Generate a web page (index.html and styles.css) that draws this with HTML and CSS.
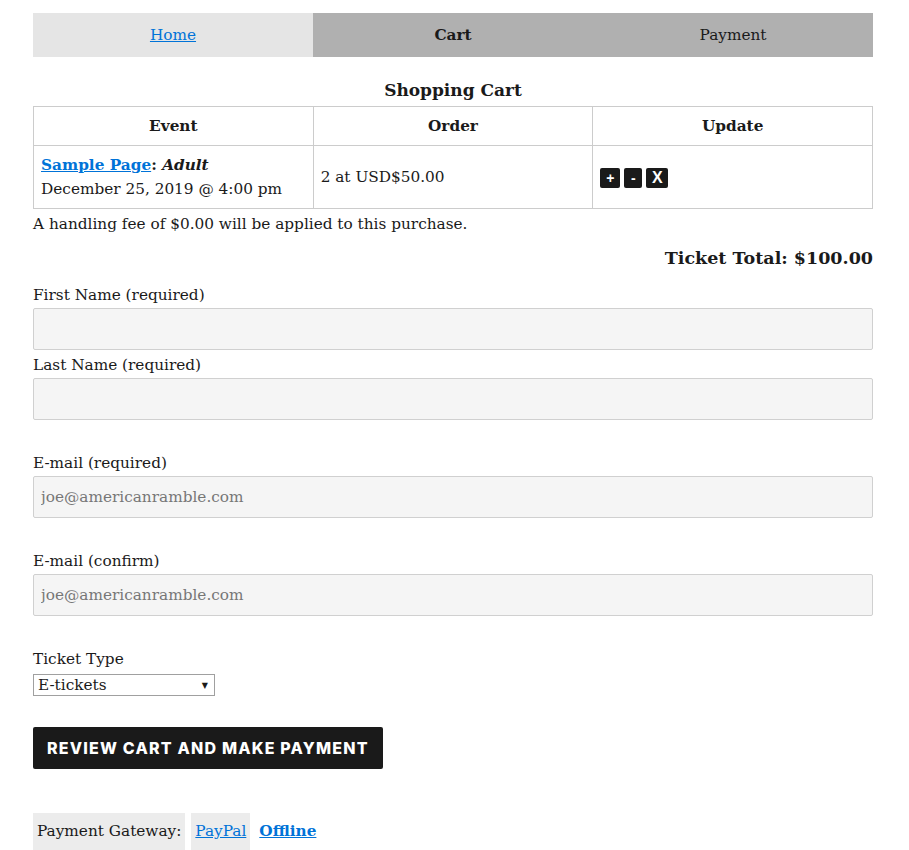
FILE: index.html
```html
<!DOCTYPE html>
<html lang="en">
<head>
    <meta charset="utf-8">
    <title>Shopping Cart</title>
    <link rel="stylesheet" href="styles.css">
</head>
<body>
<div class="wrap">
    <ul class="steps">
        <li class="step home"><a href="#">Home</a></li>
        <li class="step current">Cart</li>
        <li class="step">Payment</li>
    </ul>

    <table class="cart">
        <caption>Shopping Cart</caption>
        <thead>
        <tr>
            <th>Event</th>
            <th>Order</th>
            <th>Update</th>
        </tr>
        </thead>
        <tbody>
        <tr>
            <td><a href="#" class="event">Sample Page</a><strong>: <em>Adult</em></strong><br>December 25, 2019 @ 4:00 pm</td>
            <td>2 at USD$50.00</td>
            <td>
                <span class="upd">+</span><span class="upd">-</span><span class="upd big">X</span>
            </td>
        </tr>
        </tbody>
    </table>
    <p class="fee">A handling fee of $0.00 will be applied to this purchase.</p>
    <p class="total">Ticket Total: $100.00</p>

    <form class="checkout">
        <label for="fname">First Name (required)</label>
        <input type="text" id="fname">
        <label for="lname">Last Name (required)</label>
        <input type="text" id="lname">

        <label for="email" class="spaced">E-mail (required)</label>
        <input type="text" id="email" placeholder="joe@americanramble.com">

        <label for="email2" class="spaced">E-mail (confirm)</label>
        <input type="text" id="email2" placeholder="joe@americanramble.com">

        <label for="ttype" class="spaced">Ticket Type</label>
        <div class="select">
            <span>E-tickets</span>
            <span class="arrow">&#9660;</span>
        </div>

        <button type="button" class="review">Review cart and make payment</button>
    </form>

    <div class="gateway">
        <span class="gw-label">Payment Gateway:</span>
        <a href="#" class="gw-opt">PayPal</a>
        <a href="#" class="gw-opt active">Offline</a>
    </div>
</div>
</body>
</html>
```

FILE: styles.css
```css
body {
    margin: 0;
    font-family: "DejaVu Serif", serif;
    font-size: 15.3px;
    color: #1a1a1a;
    background: #fff;
}
.wrap {
    width: 840px;
    margin: 0 0 0 33px;
    padding-top: 13px;
}
a {
    color: #0073d8;
}

.steps {
    display: flex;
    list-style: none;
    margin: 0;
    padding: 0;
}
.step {
    flex: 1;
    height: 44px;
    line-height: 44px;
    text-align: center;
    background: #b0b0b0;
}
.step.home {
    background: #e5e5e5;
}
.step.current {
    font-weight: bold;
}

.cart {
    width: 100%;
    border-collapse: collapse;
    table-layout: fixed;
    margin-top: 23px;
}
.cart caption {
    font-size: 17px;
    font-weight: bold;
    padding-bottom: 6px;
}
.cart th, .cart td {
    border: 1px solid #cccccc;
    padding: 7px 7px;
}
.cart th {
    height: 24px;
    font-weight: bold;
}
.cart td {
    line-height: 24px;
    height: 48px;
}
.event {
    font-weight: bold;
}
.upd {
    display: inline-block;
    background: #1a1a1a;
    color: #fff;
    font-family: "Liberation Sans", sans-serif;
    font-weight: bold;
    font-size: 14px;
    line-height: 20px;
    height: 20px;
    width: 20px;
    text-align: center;
    border-radius: 2px;
    margin-right: 4px;
    vertical-align: middle;
}
.upd + .upd {
    width: 18px;
}
.upd.big {
    width: 22px;
    font-size: 16px;
}

.fee {
    margin: 6px 0 0 0;
}
.total {
    margin: 15px 0 0 0;
    text-align: right;
    font-size: 17.5px;
    font-weight: bold;
}

.checkout {
    display: flex;
    flex-direction: column;
    align-items: flex-start;
    margin-top: 15px;
}
.checkout label {
    line-height: 24px;
    margin-bottom: 1px;
}
.checkout label.spaced {
    margin-top: 28px;
}
.checkout input {
    box-sizing: border-box;
    width: 100%;
    height: 42px;
    margin: 0 0 3px 0;
    padding: 0 7px;
    border: 1px solid #d0d0d0;
    border-radius: 2px;
    background: #f5f5f5;
    font-family: inherit;
    font-size: 15.3px;
    color: #1a1a1a;
}
.checkout input::placeholder {
    color: #777;
}
.select {
    box-sizing: border-box;
    width: 182px;
    height: 22px;
    border: 1px solid #a0a0a0;
    display: flex;
    justify-content: space-between;
    align-items: center;
    padding: 0 6px 0 4px;
    margin-top: 2px;
}
.select .arrow {
    font-size: 8px;
}
.review {
    margin-top: 31px;
    height: 42px;
    padding: 0 14px;
    background: #1a1a1a;
    color: #fff;
    border: 0;
    border-radius: 2px;
    font-family: Inter, sans-serif;
    font-weight: 800;
    font-size: 16px;
    letter-spacing: 1.2px;
    text-transform: uppercase;
}

.gateway {
    display: flex;
    gap: 5px;
    margin-top: 44px;
    height: 37px;
    line-height: 37px;
}
.gw-label {
    background: #ececec;
    padding: 0 4px;
    margin-right: 1px;
}
.gw-opt {
    padding: 0 4px;
    background: #ececec;
}
.gw-opt.active {
    background: none;
    font-weight: bold;
}
```
